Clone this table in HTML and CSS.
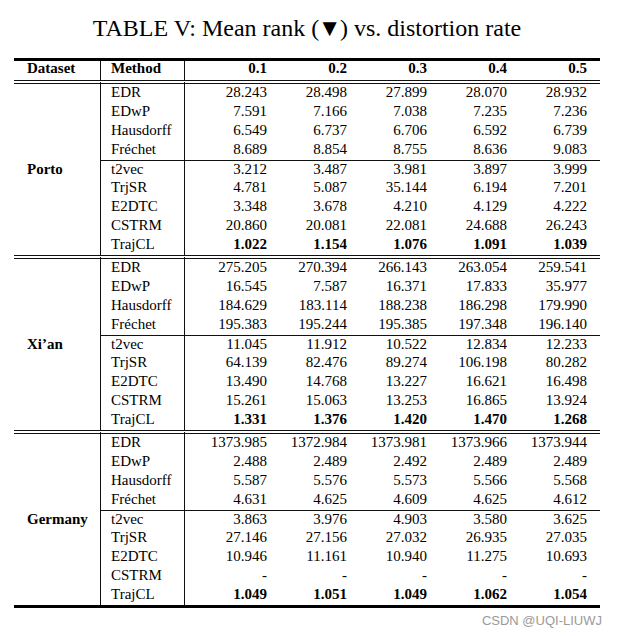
FILE: index.html
```html
<!DOCTYPE html>
<html>
<head>
<meta charset="utf-8">
<link rel="stylesheet" href="styles.css">
</head>
<body>
<div class="page">
  <h1 class="caption">TABLE V: Mean rank (<span class="tri">▼</span>) vs. distortion rate</h1>
  <table class="results">
    <thead>
      <tr>
        <th class="ds-col c-ds">Dataset</th>
        <th class="m-col c-m">Method</th>
        <th class="num c-01">0.1</th>
        <th class="num c-n">0.2</th>
        <th class="num c-n">0.3</th>
        <th class="num c-n">0.4</th>
        <th class="num c-n">0.5</th>
      </tr>
    </thead>
    <tbody>
      <tr class="first"><td class="ds-col ds" rowspan="9">Porto</td><td class="m-col">EDR</td><td class="num">28.243</td><td class="num">28.498</td><td class="num">27.899</td><td class="num">28.070</td><td class="num">28.932</td></tr>
      <tr><td class="m-col">EDwP</td><td class="num">7.591</td><td class="num">7.166</td><td class="num">7.038</td><td class="num">7.235</td><td class="num">7.236</td></tr>
      <tr><td class="m-col">Hausdorff</td><td class="num">6.549</td><td class="num">6.737</td><td class="num">6.706</td><td class="num">6.592</td><td class="num">6.739</td></tr>
      <tr><td class="m-col">Fréchet</td><td class="num">8.689</td><td class="num">8.854</td><td class="num">8.755</td><td class="num">8.636</td><td class="num">9.083</td></tr>
      <tr class="split"><td class="m-col">t2vec</td><td class="num">3.212</td><td class="num">3.487</td><td class="num">3.981</td><td class="num">3.897</td><td class="num">3.999</td></tr>
      <tr><td class="m-col">TrjSR</td><td class="num">4.781</td><td class="num">5.087</td><td class="num">35.144</td><td class="num">6.194</td><td class="num">7.201</td></tr>
      <tr><td class="m-col">E2DTC</td><td class="num">3.348</td><td class="num">3.678</td><td class="num">4.210</td><td class="num">4.129</td><td class="num">4.222</td></tr>
      <tr><td class="m-col">CSTRM</td><td class="num">20.860</td><td class="num">20.081</td><td class="num">22.081</td><td class="num">24.688</td><td class="num">26.243</td></tr>
      <tr><td class="m-col">TrajCL</td><td class="num best">1.022</td><td class="num best">1.154</td><td class="num best">1.076</td><td class="num best">1.091</td><td class="num best">1.039</td></tr>
    </tbody>
    <tbody>
      <tr class="first"><td class="ds-col ds" rowspan="9">Xi’an</td><td class="m-col">EDR</td><td class="num">275.205</td><td class="num">270.394</td><td class="num">266.143</td><td class="num">263.054</td><td class="num">259.541</td></tr>
      <tr><td class="m-col">EDwP</td><td class="num">16.545</td><td class="num">7.587</td><td class="num">16.371</td><td class="num">17.833</td><td class="num">35.977</td></tr>
      <tr><td class="m-col">Hausdorff</td><td class="num">184.629</td><td class="num">183.114</td><td class="num">188.238</td><td class="num">186.298</td><td class="num">179.990</td></tr>
      <tr><td class="m-col">Fréchet</td><td class="num">195.383</td><td class="num">195.244</td><td class="num">195.385</td><td class="num">197.348</td><td class="num">196.140</td></tr>
      <tr class="split"><td class="m-col">t2vec</td><td class="num">11.045</td><td class="num">11.912</td><td class="num">10.522</td><td class="num">12.834</td><td class="num">12.233</td></tr>
      <tr><td class="m-col">TrjSR</td><td class="num">64.139</td><td class="num">82.476</td><td class="num">89.274</td><td class="num">106.198</td><td class="num">80.282</td></tr>
      <tr><td class="m-col">E2DTC</td><td class="num">13.490</td><td class="num">14.768</td><td class="num">13.227</td><td class="num">16.621</td><td class="num">16.498</td></tr>
      <tr><td class="m-col">CSTRM</td><td class="num">15.261</td><td class="num">15.063</td><td class="num">13.253</td><td class="num">16.865</td><td class="num">13.924</td></tr>
      <tr><td class="m-col">TrajCL</td><td class="num best">1.331</td><td class="num best">1.376</td><td class="num best">1.420</td><td class="num best">1.470</td><td class="num best">1.268</td></tr>
    </tbody>
    <tbody>
      <tr class="first"><td class="ds-col ds" rowspan="9">Germany</td><td class="m-col">EDR</td><td class="num">1373.985</td><td class="num">1372.984</td><td class="num">1373.981</td><td class="num">1373.966</td><td class="num">1373.944</td></tr>
      <tr><td class="m-col">EDwP</td><td class="num">2.488</td><td class="num">2.489</td><td class="num">2.492</td><td class="num">2.489</td><td class="num">2.489</td></tr>
      <tr><td class="m-col">Hausdorff</td><td class="num">5.587</td><td class="num">5.576</td><td class="num">5.573</td><td class="num">5.566</td><td class="num">5.568</td></tr>
      <tr><td class="m-col">Fréchet</td><td class="num">4.631</td><td class="num">4.625</td><td class="num">4.609</td><td class="num">4.625</td><td class="num">4.612</td></tr>
      <tr class="split"><td class="m-col">t2vec</td><td class="num">3.863</td><td class="num">3.976</td><td class="num">4.903</td><td class="num">3.580</td><td class="num">3.625</td></tr>
      <tr><td class="m-col">TrjSR</td><td class="num">27.146</td><td class="num">27.156</td><td class="num">27.032</td><td class="num">26.935</td><td class="num">27.035</td></tr>
      <tr><td class="m-col">E2DTC</td><td class="num">10.946</td><td class="num">11.161</td><td class="num">10.940</td><td class="num">11.275</td><td class="num">10.693</td></tr>
      <tr><td class="m-col">CSTRM</td><td class="num">-</td><td class="num">-</td><td class="num">-</td><td class="num">-</td><td class="num">-</td></tr>
      <tr><td class="m-col">TrajCL</td><td class="num best">1.049</td><td class="num best">1.051</td><td class="num best">1.049</td><td class="num best">1.062</td><td class="num best">1.054</td></tr>
    </tbody>
  </table>
  <div class="mark">CSDN @UQI-LIUWJ</div>
</div>
</body>
</html>
```

FILE: styles.css
```css
* { box-sizing: border-box; }

body {
  margin: 0;
  background: #fff;
  color: #000;
  font-family: "Liberation Serif", "Times New Roman", serif;
}

.page {
  width: 586px;
  margin-left: 14px;
}

.caption {
  margin: 14px 0 16px;
  font-size: 24px;
  line-height: 28px;
  font-weight: normal;
  text-align: center;
}

.tri {
  margin: 0 -1.5px;
}

.results {
  width: 586px;
  table-layout: fixed;
  border-collapse: separate;
  border-spacing: 0;
  border-top: 3px solid #000;
  border-bottom: 3px solid #000;
  font-size: 15px;
}

.results th,
.results td {
  padding: 0;
}

.results th {
  font-weight: bold;
  line-height: 15px;
  padding-bottom: 4px;
}

.results td {
  line-height: 17px;
  padding-bottom: 2px;
}

.results .c-ds { width: 87px; }
.results .c-m { width: 84px; }
.results .c-01 { width: 95px; }
.results .c-n { width: 80px; }

.results .ds-col {
  text-align: left;
  padding-left: 13px;
  border-right: 1px solid #111;
}

.results .m-col {
  text-align: left;
  padding-left: 10px;
  border-right: 1px solid #111;
}

.results .num {
  text-align: right;
  padding-right: 13px;
}

.results tr.first > td {
  border-top: 4px double #111;
}

.results tr.split > td {
  border-top: 1px solid #111;
  line-height: 16px;
}

.results td.ds {
  vertical-align: middle;
  font-weight: bold;
  padding-bottom: 0;
}

.results .best {
  font-weight: bold;
}

.mark {
  margin: 5px -2px 0 0;
  text-align: right;
  font-family: "Liberation Sans", Arial, sans-serif;
  font-size: 13px;
  line-height: 15px;
  color: #9a9a9a;
}
```
